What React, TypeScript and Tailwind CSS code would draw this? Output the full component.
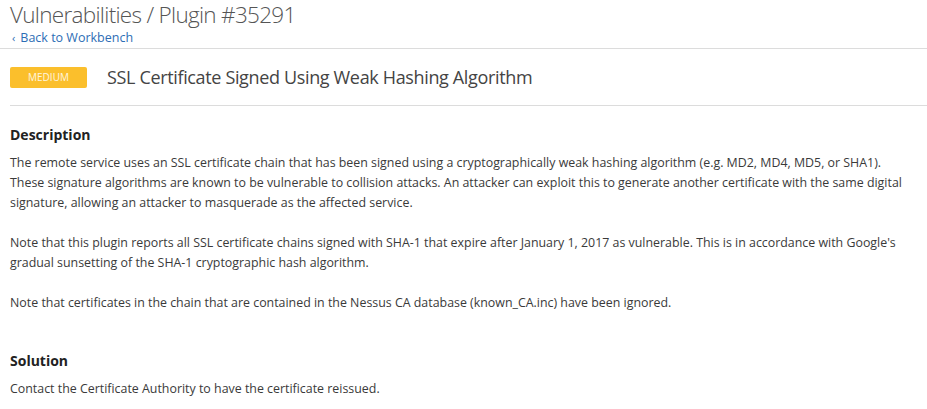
export default function App() {
    const font = "font-['Open_Sans','Noto_Sans',sans-serif]";

    return (
        <div className={`${font} bg-white w-[927px] h-[409px] overflow-hidden text-[#333]`}>
            <header className="px-[10px]">
                <h1 className="text-[22.5px] leading-[27px] font-light tracking-[-0.7px] text-[#555] pt-[1px]">
                    Vulnerabilities / Plugin #35291
                </h1>
                <a href="#" className="flex items-center gap-[5px] text-[12.5px] leading-[16px] text-[#2d6db5] pl-[2px] mt-[2px]">
                    <span className="text-[11px] leading-[16px]">‹</span>
                    Back to Workbench
                </a>
            </header>
            <div className="mt-[2px] border-b border-[#dcdcdc]" />

            <div className="flex items-center gap-[20px] pl-[10px] h-[56px]">
                <span className="w-[77px] h-[21px] rounded-[2px] bg-[#fbbf2c] text-white/85 text-[10px] uppercase flex items-center justify-center">
                    Medium
                </span>
                <h2 className="text-[18px] tracking-[-0.35px] text-[#444]">SSL Certificate Signed Using Weak Hashing Algorithm</h2>
            </div>
            <div className="ml-[10px] border-b border-[#dcdcdc]" />

            <section className="px-[10px] text-[12.4px] leading-[20px] text-[#3a3a3a]">
                <h3 className="text-[14px] font-bold text-[#222] mt-[19px] mb-[8px] leading-[20px]">Description</h3>
                <p className="mb-[20px]">
                    The remote service uses an SSL certificate chain that has been signed using a cryptographically weak hashing algorithm (e.g. MD2, MD4, MD5, or SHA1).
                    <br />
                    These signature algorithms are known to be vulnerable to collision attacks. An attacker can exploit this to generate another certificate with the same digital
                    <br />
                    signature, allowing an attacker to masquerade as the affected service.
                </p>
                <p className="mb-[20px]">
                    Note that this plugin reports all SSL certificate chains signed with SHA-1 that expire after January 1, 2017 as vulnerable. This is in accordance with Google's
                    <br />
                    gradual sunsetting of the SHA-1 cryptographic hash algorithm.
                </p>
                <p>
                    Note that certificates in the chain that are contained in the Nessus CA database (known_CA.inc) have been ignored.
                </p>

                <h3 className="text-[14px] font-bold text-[#222] mt-[38px] mb-[8px] leading-[20px]">Solution</h3>
                <p>Contact the Certificate Authority to have the certificate reissued.</p>
            </section>
        </div>
    );
}
